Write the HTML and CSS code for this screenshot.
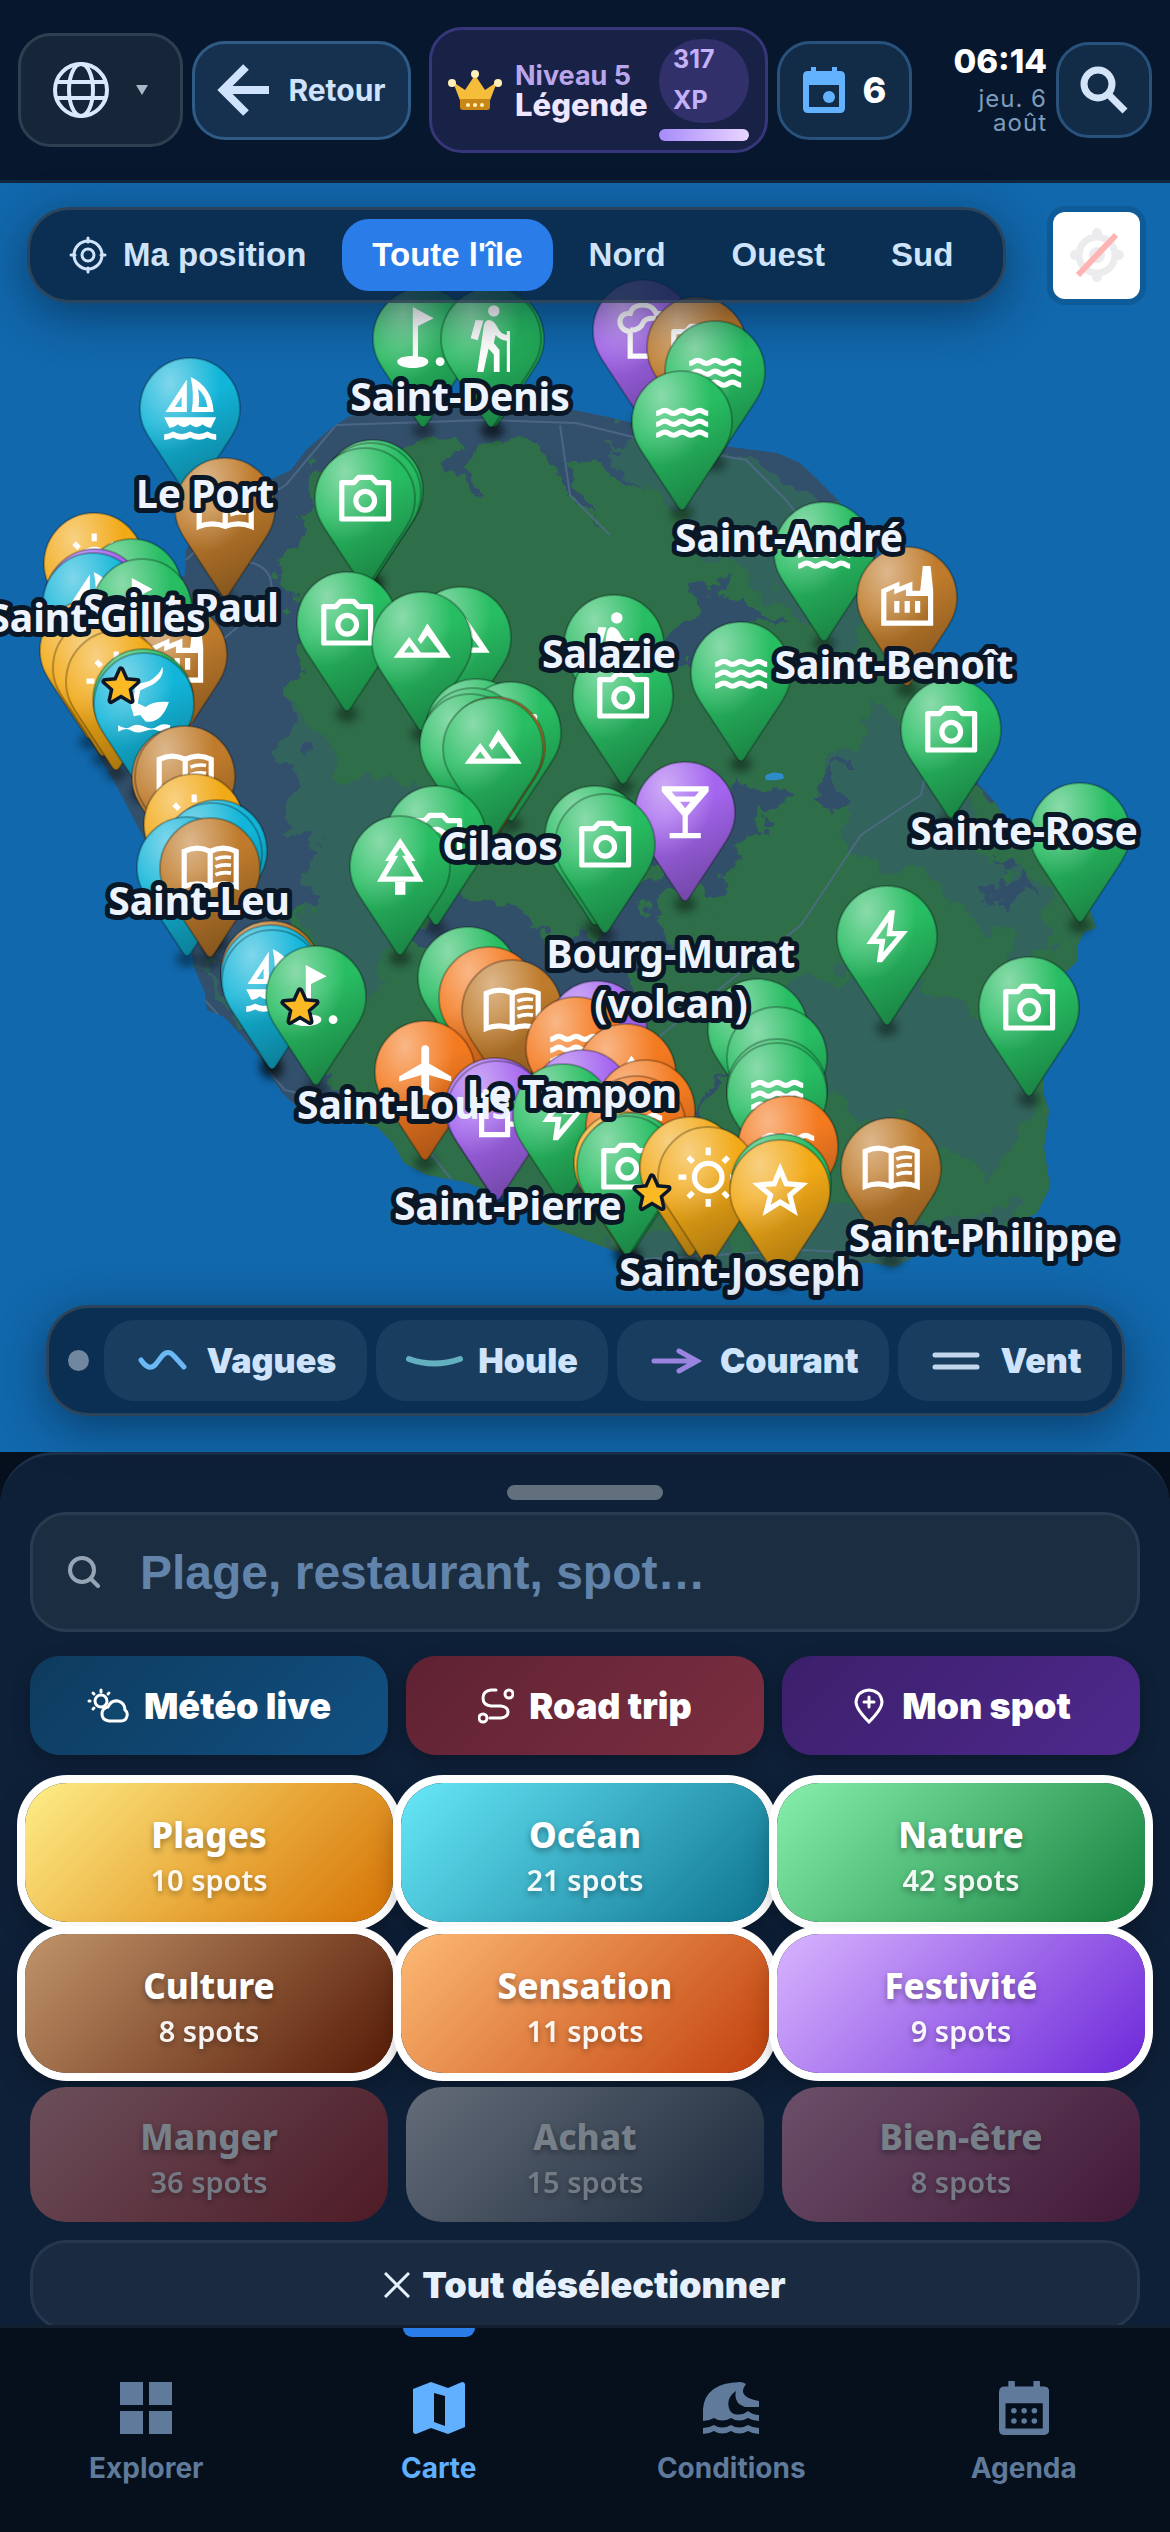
FILE: index.html
```html
<!DOCTYPE html>
<html lang="fr">
<head>
<meta charset="utf-8">
<meta name="viewport" content="width=device-width, initial-scale=1">
<title>Carte</title>
<link rel="stylesheet" href="styles.css">
</head>
<body>
<header class="topbar">
  <button class="pill lang" aria-label="Langue">
    <svg class="globe" viewBox="0 0 56 56" fill="none" stroke="currentColor" stroke-width="4"><circle cx="28" cy="28" r="26"/><ellipse cx="28" cy="28" rx="12" ry="26"/><path d="M4 20h48M4 36h48"/></svg>
    <svg class="caret" viewBox="0 0 12 10"><path d="M0 0h12L6 10z" fill="currentColor"/></svg>
  </button>
  <button class="pill back">
    <svg viewBox="0 0 52 52" fill="none" stroke="currentColor" stroke-width="8"><path d="M29 3 6 26l23 23M6 26h46"/></svg>
    Retour
  </button>
  <section class="pill level">
    <svg class="crown" viewBox="0 0 54 40"><path d="M5 12 17 20 27 5l10 15 12-8-8 21H13z" fill="#f5bd3a"/><path d="M12 29h30v8q0 3-3 3H15q-3 0-3-3z" fill="#c98718"/><g fill="#fff0b8"><circle cx="4" cy="13" r="4"/><circle cx="50" cy="13" r="4"/><circle cx="27" cy="4" r="4"/><circle cx="20" cy="35" r="2"/><circle cx="27" cy="35" r="2"/><circle cx="34" cy="35" r="2"/></g></svg>
    <div class="rank"><span>Niveau 5</span><strong>Légende</strong></div>
    <div class="xp"><span class="xp-badge">317 XP</span><span class="xp-bar"></span></div>
  </section>
  <button class="pill day">
    <svg viewBox="0 0 42 46"><path fill="currentColor" fill-rule="evenodd" d="M8 0h5v4h16V0h5v4h3q5 0 5 5v32q0 5-5 5H5q-5 0-5-5V9q0-5 5-5h3zM6 18v22h30V18z"/><circle cx="26" cy="30" r="6" fill="currentColor"/></svg>
    6
  </button>
  <div class="clock"><strong>06:14</strong><span>jeu. 6 août</span></div>
  <button class="pill find" aria-label="Rechercher">
    <svg viewBox="0 0 48 48" fill="none" stroke="currentColor" stroke-width="7"><circle cx="18" cy="18" r="14"/><path d="m28 28 17 17"/></svg>
  </button>
</header>

<main>
<section class="map" aria-label="Carte">
  <svg class="island" viewBox="0 183 1170 1269">
    <defs>
      <filter id="rough" x="-10%" y="-10%" width="120%" height="120%"><feTurbulence type="fractalNoise" baseFrequency="0.022" numOctaves="5" seed="8"/><feDisplacementMap in="SourceGraphic" scale="80" xChannelSelector="R" yChannelSelector="G"/></filter>
      <filter id="soft" x="-50%" y="-50%" width="200%" height="200%"><feGaussianBlur stdDeviation="4"/></filter>
      <radialGradient id="shine" cx=".3" cy=".18" r=".5"><stop offset="0" stop-color="#fff" stop-opacity=".46"/><stop offset="1" stop-color="#fff" stop-opacity="0"/></radialGradient>
      <linearGradient id="shade" x1=".3" y1="0" x2=".65" y2="1"><stop offset=".35" stop-opacity="0"/><stop offset="1" stop-opacity=".32"/></linearGradient>
      <clipPath id="land"><path d="M186 550 190 543 230 500 276 477 291 470 306 450 329 430 348 417 400 402 500 396 574 410 608 417 670 432 731 447 777 453 800 463 815 477 838 500 862 535 885 575 910 620 935 680 960 740 979 785 995 802 1006 820 1040 845 1065 880 1090 910 1096 928 1084 932 1078 945 1078 960 1063 975 1050 1010 1043 1080 1043 1093 1049 1110 1044 1147 1050 1187 1037 1213 980 1240 914 1257 895 1267 872 1263 800 1262 720 1270 660 1264 619 1253 580 1238 546 1225 510 1200 465 1182 427 1175 404 1163 393 1143 377 1127 330 1115 293 1103 282 1093 259 1057 243 1037 224 1017 207 1010 205 993 194 967 191 948 165 900 150 850 115 783 92 745 72 690 90 640 150 600 185 575z"/></clipPath>
      <path id="drop" d="M50 0C22 0 0 23 0 51c0 14 6 24 12 33l34 52q4 6 8 0l34-52c6-9 12-19 12-33C100 23 78 0 50 0z"/>
      <g id="camera" class="line"><path d="M3 20V6h4.600l1.900-2h5l1.900 2H21v14z" stroke-linejoin="round"/><circle cx="12" cy="13" r="3.600"/></g>
      <g id="waves" class="line"><path d="M2 9c1.670 0 1.670-1.200 3.330-1.200s1.670 1.200 3.330 1.200 1.670-1.200 3.330-1.200 1.670 1.200 3.330 1.200 1.670-1.200 3.330-1.200S20.300 9 22 9M2 13.200c1.670 0 1.670-1.200 3.330-1.200s1.670 1.200 3.330 1.200S10.300 12 12 12s1.670 1.200 3.330 1.200 1.670-1.200 3.330-1.200 1.670 1.200 3.330 1.200M2 17.400c1.670 0 1.670-1.200 3.330-1.200s1.670 1.200 3.330 1.200 1.670-1.200 3.330-1.200 1.670 1.200 3.330 1.200 1.670-1.200 3.330-1.200 1.670 1.200 3.330 1.200"/></g>
      <g id="mountain" class="solid"><path fill-rule="evenodd" d="m1 18 6-8 4.500 6H19l-5-6.650-2.500 3.320L10.250 11 14 4.800 23 18zm4-2h4l-2-2.700z"/></g>
      <g id="bolt" class="solid"><path fill-rule="evenodd" d="m10.550 18.200 5.170-6.200h-4l.730-5.680L7.820 13h3.480zM8 22l1-7H4l9-13h2l-1 8h6L10 22z"/></g>
      <g id="sun" class="line"><circle cx="12" cy="12" r="5.300"/><path d="M12 .6v3M12 20.400v3M.6 12h3M20.400 12h3M4.300 4.300l1.900 1.900M17.800 17.800l1.900 1.900M4.300 19.700l1.900-1.900M17.800 6.200l1.900-1.900"/></g>
      <g id="star" class="line"><path d="m12 4 2.300 5.500 6 .5-4.600 3.900 1.500 5.900-5.200-3.200-5.200 3.200 1.500-5.900L3.700 10l6-.5z"/></g>
      <g id="book" class="line"><path d="M2 5.500Q7 3 12 5.500 17 3 22 5.500V19q-5-2-10 0-5-2-10 0zM12 5.500V19"/><path stroke-width="1.400" d="M14 8.500q3-1.200 6-.6M14 11.500q3-1.200 6-.6M14 14.500q3-1.200 6-.6"/></g>
      <g id="sail" class="solid"><path fill-rule="evenodd" d="M2.500 13.500 10.700 1v12.500zm3.600-2h2.600V7.500zM12.500 13.500Q13.700 7 12.200 0 20.500 4 21 13.500zm2.700-2h3.400Q18 7 14.900 4.500q.8 3 .3 7zM2 15.500h20l-2 4q-1.800 0-3.200-1.300-2.400 2.200-4.800 0-2.400 2.200-4.800 0Q5.800 19.500 4 19.500zM2 22q1.900 0 3.400-1 3.300 1.800 6.600 0 3.300 1.800 6.600 0Q20 22 22 22v2.200q-1.800 0-3.400-.9-3.300 1.700-6.600 0-3.300 1.700-6.600 0-1.600.9-3.400.9z"/></g>
      <g id="golf" class="solid"><path d="M8 0l8 4.300-6 3V19q4 .3 4 2c0 1.500-2.700 2.500-6 2.500S2 22.500 2 21c0-1.300 2-2.200 6-2.200z"/><circle cx="18.500" cy="21" r="1.700"/></g>
      <g id="hike" class="solid"><circle cx="13" cy="1.500" r="2.200"/><path d="m6 5-1.900 7 2.700.8L9 5.200zM9 25l2-9 2 2.300V25h2.200v-8.500L13 13.800l.7-3q1.600 2 4.300 2.200V25h1.200V9.200H18v1.600q-2.100-.3-3.200-2.200-1.500-3.500-3.600-3.600Q9.700 5 9.200 7L6.600 25z"/></g>
      <g id="bar" class="solid"><path fill-rule="evenodd" d="M6 22v-2h5v-6.600L3 4V2h18v2l-8 9.400V20h5v2zM8.300 6h7.400l1.600-2H6.700zM12 10.500 14 8h-4z"/></g>
      <g id="tree" class="line"><path d="m12 3-4 6h1.500L4.800 17h14.400L14.500 9H16z"/><path stroke-width="4" d="M12 18v5"/></g>
      <g id="plane" class="solid"><path d="M22 16v-2l-8.500-5V3.500a1.500 1.500 0 0 0-3 0V9L2 14v2l8.500-2.500V19L8 20.500V22l4-1 4 1v-1.500L13.500 19v-5.500z"/></g>
      <g id="factory" class="solid"><path fill-rule="evenodd" d="M2 23V9l7-3v2l5-2v3.500h3l1-9.500h3l1 9.500V23zm2-2h16v-9.500H11.500V9L7 10.900V8.700L4 10.200zm3-7.500h2V18H7zm4 0h2V18h-2zm4 0h2V18h-2z"/></g>
      <g id="chef" class="line"><path d="M7 22v-9.500C1.500 12 2 5 7 5.500 8 1.500 15 1 17 5.500c5-.5 5.500 7 0 7V22zM7 12q4 0 5-3 1-2 5-1.500"/></g>
      <g id="beer" class="line"><path d="M6 21V6h10v15zM16 9h4v8h-4"/></g>
      <g id="kite" class="solid"><path d="M19-2q-1 3-5 5.500L8.500 5 8 10q-2 2.500-.5 5L8 17l2.500-.5 2 2.500q6 1 9-7.500-6-.5-9 2L9.500 12l1-5L15 5q5-3 4-7zM2 20.500q3 2 5 .5t5 0 5 0 5-.5v2q-3 .8-5 0t-5 .3-5-.3-5 .5z"/></g>
      <path id="fav" d="m0-16 4.700 10.500L16-4.500 7.500 3 10 14.500 0 8.500-10 14.500-7.500 3-16-4.500l11.300-1z"/>
    </defs>
    <rect y="183" width="1170" height="1269" fill="#1168ac"/>
    <g clip-path="url(#land)">
      <rect y="380" width="1170" height="900" fill="#32506b"/>
      <g filter="url(#rough)">
        <path fill="#2d6e49" d="M310 470q110-50 220-20 90 30 170 50 110 20 180 110 80 100 120 200 100 60 120 140 0 160-20 290-150 80-350 70-180 0-280-90-120-50-140-160-30-120-10-250-60-140-10-340z"/>
        <path fill="#33635c" d="M290 700q60 100 120 80 20 130-60 240-60-160-60-320zM600 430q150 0 260 110 40 80-30 100-70-60-150-110zM900 700q60 90 90 150l60 70-20 60q-90-120-180-130-50-80 50-150zM720 1010q140-80 260 0 60 60 40 160-200-50-300-160zM600 1240q150-10 420-40l-40 60-360 30zM200 950l50 90-30-10z"/>
        <path fill="#32506b" d="M560 440l30 90-30-40-20-50zM720 590l60 20-80 50-100 0-20-30 70 0zM640 870l100-90 40 20-50 70-70 100-60 80-80-20 60-90zM440 870l90 50 40 60-60 40-90-90zM360 520l20 70-20-50zM790 800l60-30-10 40zM470 430l0 60-20-40zM750 1010l-60 130 20-20zM1000 860l20 60-40-40z"/>
        <path fill="#2d6e49" d="M640 900l60-20 20 30-70 40z"/>
      </g>
      <g class="roads"><path d="M186 560q40-40 100-75l50-60 150-5 90 3 110 27 60 10 40 40 40 50 90 110 25 45-20 90-60 40-60 90-140 110-10 50M205 1000l80 90 120 30 70 90 150 50 180-10 180 10 110-60 2-120-10-100 20-60M230 560q50 0 40 40l-60 50-20 80M560 425l10 70 40 40"/></g>
      <path fill="#2e8cc8" d="M765 776q8-6 18-2l1 4q-4 3-18 2z"/>
    </g>
    <g id="pins"></g>
    <g class="places">
      <text x="205" y="508">Le Port</text><text x="460" y="411">Saint-Denis</text>
      <text x="181" y="622">Saint-Paul</text><text x="97" y="632">Saint-Gilles</text>
      <text x="789" y="552">Saint-André</text><text x="609" y="668">Salazie</text>
      <text x="894" y="679">Saint-Benoît</text><text x="1024" y="845">Sainte-Rose</text>
      <text x="500" y="860">Cilaos</text><text x="199" y="915">Saint-Leu</text>
      <text x="671" y="968">Bourg-Murat</text><text x="671" y="1018">(volcan)</text>
      <text x="572" y="1108">Le Tampon</text><text x="404" y="1119">Saint-Lo<tspan class="bare">uis</tspan></text>
      <text x="508" y="1220">Saint-Pierre</text><text x="740" y="1286">Saint-Joseph</text>
      <text x="983" y="1252">Saint-Philippe</text>
    </g>
    <g class="favs"><use href="#fav" x="121" y="686"/><use href="#fav" x="300" y="1007"/><use href="#fav" x="652" y="1193"/></g>
  </svg>

  <div class="map-top">
    <nav class="zones" aria-label="Zones">
      <button><svg viewBox="0 0 38 38" fill="none" stroke="currentColor" stroke-width="3" stroke-linecap="round"><circle cx="19" cy="19" r="14"/><circle cx="19" cy="19" r="6"/><path d="M19 2v4M19 32v4M2 19h4M32 19h4"/></svg>Ma position</button>
      <button class="on">Toute l'île</button><button>Nord</button><button>Ouest</button><button>Sud</button>
    </nav>
    <button class="locate" aria-label="Localisation désactivée"><svg viewBox="0 0 54 54" fill="none"><circle cx="27" cy="27" r="18" stroke="#ececee" stroke-width="7"/><circle cx="27" cy="27" r="8" fill="#ececee"/><g fill="#ececee"><circle cx="27" cy="5" r="5"/><circle cx="27" cy="49" r="5"/><circle cx="5" cy="27" r="5"/><circle cx="49" cy="27" r="5"/></g><path d="M8 47 46 7" stroke="#ffb4b4" stroke-width="6"/></svg></button>
  </div>

  <div class="layers">
    <span class="dot"></span>
    <button><svg viewBox="0 0 57 30" fill="none" stroke="#6cb8f5" stroke-width="5" stroke-linecap="round"><path d="M6 14q8 12 15 4l6-8q6-7 12 0l10 11"/></svg>Vagues</button>
    <button><svg viewBox="0 0 57 30" fill="none" stroke="#62b0c0" stroke-width="6" stroke-linecap="round"><path d="M3 13q25 9 51 0"/></svg>Houle</button>
    <button><svg viewBox="0 0 57 30" fill="none" stroke="#9a84e0" stroke-width="5" stroke-linecap="round"><path d="M6 15h43M31 5l18 10-18 10"/></svg>Courant</button>
    <button><svg viewBox="0 0 57 30" fill="none" stroke="#c4d6ec" stroke-width="5" stroke-linecap="round"><path d="M6 9h42M6 21h42"/></svg>Vent</button>
  </div>
</section>

<section class="sheet">
  <span class="handle"></span>
  <label class="search">
    <svg viewBox="0 0 32 32" fill="none" stroke="currentColor" stroke-width="4" stroke-linecap="round"><circle cx="14" cy="14" r="12"/><path d="m23 23 7 7"/></svg>
    <input type="text" placeholder="Plage, restaurant, spot…" aria-label="Rechercher un lieu">
  </label>
  <div class="grid actions">
    <button class="meteo"><svg viewBox="0 0 42 36"><g fill="none" stroke="currentColor" stroke-width="3" stroke-linecap="round"><circle cx="14" cy="13" r="6"/><path d="M14 2v2M3 13h-1M6 5l1 1M22 5l-1 1M6 21l1-1"/><path d="M22 33q-7-1-7-7 0-6 6-7 3-7 10-6 7 2 7 9 3 2 2 6-1 5-6 5z" fill="#10476f"/></g></svg>Météo live</button>
    <button class="road"><svg viewBox="0 0 36 36" fill="none" stroke="currentColor" stroke-width="3" stroke-linecap="round"><circle cx="5" cy="30" r="4"/><circle cx="31" cy="6" r="4"/><path d="M18 2h-5q-8 1-8 8t8 8h10q7 1 7 6t-7 6H12"/></svg>Road trip</button>
    <button class="mine"><svg viewBox="0 0 36 36" fill="none" stroke="currentColor" stroke-width="3" stroke-linecap="round"><path d="M18 34Q5 21 5 14 6 3 18 2q12 1 13 12 0 7-13 20zM18 9v10M13 14h10"/></svg>Mon spot</button>
  </div>
  <div class="grid cats">
    <button class="cat plages"><b>Plages</b><span>10 spots</span></button>
    <button class="cat ocean"><b>Océan</b><span>21 spots</span></button>
    <button class="cat nature"><b>Nature</b><span>42 spots</span></button>
    <button class="cat culture"><b>Culture</b><span>8 spots</span></button>
    <button class="cat sensation"><b>Sensation</b><span>11 spots</span></button>
    <button class="cat festivite"><b>Festivité</b><span>9 spots</span></button>
    <button class="cat off manger"><b>Manger</b><span>36 spots</span></button>
    <button class="cat off achat"><b>Achat</b><span>15 spots</span></button>
    <button class="cat off bien"><b>Bien-être</b><span>8 spots</span></button>
  </div>
  <button class="clear"><svg viewBox="0 0 26 26" fill="none" stroke="currentColor" stroke-width="3"><path d="m1 1 24 24M25 1 1 25"/></svg>Tout désélectionner</button>
</section>
</main>

<nav class="tabs">
  <a href="#explorer"><svg viewBox="0 0 54 54" fill="currentColor"><path d="M1 1h23v23H1zM30 1h23v23H30zM1 30h23v23H1zM30 30h23v23H30z"/></svg>Explorer</a>
  <a href="#carte" class="active"><svg viewBox="0 0 54 54" fill="currentColor"><path fill-rule="evenodd" d="M1 8 19 1l17 6 14-6q3 0 3 3v42l-17 7-17-6-15 6q-3 0-3-3zm21 4v29l11 4V15z"/></svg>Carte</a>
  <a href="#conditions"><svg viewBox="0 0 58 54" fill="currentColor"><path d="M1 40V28Q3 2 38 1q3 0 6 2-10 13 13 17v6H43Q31 22 34 10q-10 7-7 17 1 4 5 6 8 2 14-3 5 4 11 4v6q-6 0-11-3-9 5-17 0-9 5-17 0-5 3-11 3zM1 47q6 0 11-3 8 5 17 0 8 5 17 0 5 3 11 3v6q-6 0-11-3-9 5-17 0-9 5-17 0-5 3-11 3z"/></svg>Conditions</a>
  <a href="#agenda"><svg viewBox="0 0 54 58" fill="currentColor"><path fill-rule="evenodd" d="M10 0h7v6h20V0h7v6h4q6 0 6 6v40q0 6-6 6H6q-6 0-6-6V12q0-6 6-6h4zM7 24v27h40V24z"/><g><circle cx="16" cy="32" r="3"/><circle cx="27" cy="32" r="3"/><circle cx="38" cy="32" r="3"/><circle cx="16" cy="43" r="3"/><circle cx="27" cy="43" r="3"/><circle cx="38" cy="43" r="3"/></g></svg>Agenda</a>
</nav>
<script src="pins.js"></script>
</body>
</html>
```
FILE: styles.css
```css
* { box-sizing: border-box; }
body { margin: 0; background: #06101d; color: #fff; font-family: Inter, sans-serif; overflow-x: hidden; }
button { font: inherit; color: inherit; border: 0; background: none; padding: 0; margin: 0; cursor: pointer; white-space: nowrap; }
svg { display: block; flex: none; }

.topbar { display: flex; align-items: center; gap: 9px; padding: 27px 18px; background: #07182e; border-bottom: 3px solid #12273d; }
.pill { display: flex; align-items: center; justify-content: center; height: 99px; border: 3px solid #28527b; border-radius: 33px; background: #122c48; flex: none; }
.lang { width: 165px; height: 114px; gap: 27px; background: #172538; border-color: #2e3f52; color: #d9e8fa; }
.globe { width: 56px; }
.caret { width: 12px; color: #a9b7c8; }
.back { width: 219px; gap: 19px; background: #15314f; border-color: #2f5b87; color: #cfe3fc; font-size: 30px; font-weight: 700; }
.back svg { width: 52px; }
.level { width: 339px; height: 126px; margin-left: 9px; gap: 13px; background: #182246; border-color: #38367a; }
.crown { width: 54px; }
.rank { display: flex; flex-direction: column; width: 131px; line-height: 29px; font-size: 27px; font-weight: 700; color: #bba6ec; }
.rank strong { font-size: 31px; font-weight: 800; color: #efe6ff; }
.xp { display: flex; flex-direction: column; gap: 6px; width: 90px; }
.xp-badge { height: 84px; padding: 0 14px; border-radius: 42px; background: #31306b; color: #c4b1f8; font-size: 25px; font-weight: 700; line-height: 41px; }
.xp-bar { height: 12px; border-radius: 6px; background: linear-gradient(90deg, #a78bfa, #e9d5ff); }
.day { width: 135px; gap: 18px; color: #fff; font-size: 36px; font-weight: 800; }
.day svg { width: 42px; color: #62b2ff; }
.clock { flex: 1; display: flex; flex-direction: column; align-items: flex-end; text-align: right; font-size: 24px; line-height: 24px; color: #7f9cbc; }
.clock strong { font-size: 33px; line-height: 33px; font-weight: 800; color: #fff; margin-bottom: 9px; }
.clock span { width: 78px; letter-spacing: 1px; }
.find { width: 96px; height: 96px; color: #d3e4f8; }
.find svg { width: 48px; }

.map { position: relative; }
.island { width: 100%; height: auto; }
.roads { fill: none; stroke: #516c8c; stroke-width: 2; opacity: .8; }
.line { fill: none; stroke: #fff; stroke-width: 2; }
.solid { fill: #fff; }
.rim { fill: none; stroke: #000; stroke-opacity: .25; stroke-width: 2; }
.green { fill: #27bd62; }
.cyan { fill: #12b5d9; }
.brown { fill: #bf7b2b; }
.orange { fill: #f47a20; }
.yellow { fill: #f2a916; }
.purple { fill: #a465ef; }
.places { font: 700 39px "Noto Sans", sans-serif; text-anchor: middle; fill: #eef4ff; stroke: #0a1726; stroke-width: 10px; stroke-linejoin: round; paint-order: stroke; }
.bare { stroke: none; }
.favs { fill: #fbb924; stroke: #0a1726; stroke-width: 7px; stroke-linejoin: round; paint-order: stroke; }

.map-top { position: absolute; top: 24px; left: 27px; right: 30px; display: flex; align-items: center; gap: 47px; }
.zones { flex: 1; display: flex; gap: 6px; padding: 9px; border: 3px solid rgba(80, 90, 100, .5); border-radius: 42px; background: rgba(9, 34, 62, .82); box-shadow: 0 12px 48px rgba(0, 10, 30, .45); color: #cfe3fa; font: 700 33px "Liberation Sans", Arial, sans-serif; }
.zones button { display: flex; align-items: center; gap: 16px; height: 72px; padding: 0 30px; border-radius: 27px; }
.zones svg { width: 38px; }
.zones .on { background: #2a7de8; color: #fff; }
.locate { display: flex; align-items: center; justify-content: center; width: 87px; height: 87px; border-radius: 12px; background: #fff; box-shadow: 0 0 0 6px rgba(0, 20, 50, .15); }
.locate svg { width: 54px; }

.layers { position: absolute; bottom: 36px; left: 46px; right: 45px; display: flex; align-items: center; gap: 9px; padding: 12px 10px 12px 19px; border: 3px solid rgba(80, 90, 100, .5); border-radius: 42px; background: rgba(9, 34, 62, .82); box-shadow: 0 12px 48px rgba(0, 10, 30, .45); color: #cfe3fa; font-size: 34px; font-weight: 900; }
.dot { width: 21px; height: 21px; margin-right: 6px; border-radius: 50%; background: #71869f; flex: none; }
.layers button { display: flex; flex: 1 1 auto; align-items: center; justify-content: center; gap: 15px; height: 81px; border-radius: 30px; background: #183d5f; }
.layers svg { width: 57px; }

.sheet { display: flex; flex-direction: column; padding: 30px 30px 0; border-top: 3px solid #1c3049; border-radius: 54px 54px 0 0; background: #0e2038; }
.handle { width: 156px; height: 15px; margin: 0 auto 12px; border-radius: 8px; background: #62707e; }
.search { display: flex; align-items: center; gap: 40px; height: 120px; padding: 0 35px; border: 3px solid #293b51; border-radius: 36px; background: #1b2d41; color: #96a5b5; }
.search svg { width: 32px; }
.search input { flex: 1; min-width: 0; padding: 0; border: 0; outline: 0; background: none; color: #fff; font: 700 48px "Liberation Sans", Arial, sans-serif; }
.search input::placeholder { color: #6284ab; opacity: 1; }
.grid { display: grid; grid-template-columns: repeat(3, 1fr); column-gap: 18px; }
.actions { margin-top: 24px; font-size: 36px; font-weight: 900; }
.actions button { display: flex; align-items: center; justify-content: center; gap: 15px; height: 99px; border-radius: 30px; box-shadow: 0 6px 18px rgba(0, 0, 0, .25); }
.actions svg { height: 36px; }
.meteo { background: linear-gradient(135deg, #0e3b5e, #115082); }
.road { background: linear-gradient(135deg, #5f2232, #7b2f41); }
.mine { background: linear-gradient(135deg, #3c1f6b, #4e298d); }
.cats { row-gap: 16px; margin-top: 30px; font-family: "Noto Sans", sans-serif; }
.cat { display: flex; flex-direction: column; align-items: center; justify-content: center; margin: -2px -5px; height: 139px; padding-top: 8px; border-radius: 42px; box-shadow: 0 0 0 8px #fff, 0 12px 30px rgba(0, 0, 0, .4); text-shadow: 0 3px 6px rgba(0, 0, 0, .35); }
.cat b { font-size: 35px; line-height: 46px; font-weight: 800; }
.cat span { font-size: 29px; line-height: 44px; font-weight: 600; opacity: .93; }
.off { margin: 0; height: 135px; border-radius: 36px; box-shadow: none; color: #777f89; }
.plages { background: linear-gradient(135deg, #feee88, #e9a93a 55%, #d57205); }
.ocean { background: linear-gradient(135deg, #67e8f9, #0e7490); }
.nature { background: linear-gradient(135deg, #86efac, #15803d); }
.culture { background: linear-gradient(135deg, #c0946a, #581b06); }
.sensation { background: linear-gradient(135deg, #fdba74, #c2410c); }
.festivite { background: linear-gradient(135deg, #d8b4fe, #6d28d9); }
.manger { background: linear-gradient(135deg, #6b4f5b, #4e1b26); }
.achat { background: linear-gradient(135deg, #646c78, #1b2a3c); }
.bien { background: linear-gradient(135deg, #6b4f69, #421938); }
.clear { display: flex; align-items: center; justify-content: center; gap: 12px; height: 90px; margin-top: 18px; border: 3px solid #25374d; border-radius: 36px; background: #1a2a40; color: #e6f1fd; font-size: 36px; font-weight: 900; }
.clear svg { width: 26px; }

.tabs { position: relative; display: grid; grid-template-columns: repeat(4, 1fr); margin-top: -5px; height: 207px; border-top: 3px solid #111f2f; background: #05101c; }
.tabs a { position: relative; display: flex; flex-direction: column; align-items: center; gap: 16px; padding-top: 53px; color: #5f7a9a; font-size: 28px; line-height: 34px; font-weight: 700; text-decoration: none; }
.tabs svg { height: 54px; }
.tabs .active { color: #60b0ff; }
.tabs .active::before { content: ""; position: absolute; top: 0; width: 72px; height: 9px; border-radius: 0 0 9px 9px; background: #2a7de8; }
```
FILE: pins.js
```js
// Each spot: centre x, top y, category colour, icon
const spots = [
  [423, 288, "green", "golf"], [494, 288, "green"], [491, 288, "green", "hike"],
  [643, 280, "purple", "chef"], [697, 297, "brown", "camera"], [715, 321, "green", "waves"], [682, 371, "green", "waves"],
  [190, 358, "cyan", "sail"], [373, 440, "green"], [371, 443, "green"], [365, 448, "green", "camera"],
  [225, 458, "brown", "book"], [824, 502, "green", "waves"], [94, 513, "yellow", "sun"], [132, 539, "green"],
  [907, 547, "brown", "factory"], [95, 549, "purple"], [93, 553, "cyan", "sail"], [142, 559, "green", "golf"],
  [347, 572, "green", "camera"], [461, 587, "green", "mountain"], [422, 592, "green", "mountain"],
  [614, 595, "green", "hike"], [90, 600, "yellow"], [177, 604, "brown", "factory"], [103, 617, "yellow"],
  [741, 622, "green", "waves"], [116, 631, "yellow", "sun"], [623, 645, "green", "camera"],
  [143, 649, "green"], [144, 653, "cyan", "kite"], [951, 679, "green", "camera"],
  [476, 679, "green"], [511, 682, "green", "camera"], [473, 688, "green"], [470, 694, "green"],
  [495, 697, "brown"], [493, 698, "green", "mountain"], [182, 727, "brown"], [185, 726, "brown", "book"],
  [685, 762, "purple", "bar"], [194, 774, "yellow", "sun"], [1080, 783, "green"],
  [436, 786, "green", "camera"], [595, 786, "green"], [605, 794, "green", "camera"],
  [217, 800, "cyan"], [212, 803, "cyan"], [400, 816, "green", "tree"], [187, 817, "cyan"], [210, 818, "brown", "book"],
  [887, 886, "green", "bolt"], [271, 921, "brown"], [271, 925, "cyan"], [272, 930, "cyan", "sail"],
  [468, 927, "green"], [316, 946, "green", "golf"], [489, 947, "orange"], [1029, 957, "green", "camera"],
  [512, 960, "brown", "book"], [758, 979, "green", "mountain"], [597, 981, "purple"], [576, 997, "orange", "waves"],
  [777, 1007, "green"], [425, 1021, "orange", "plane"], [626, 1024, "orange", "mountain"], [777, 1039, "green"],
  [777, 1043, "green", "waves"], [582, 1050, "purple", "camera"], [495, 1058, "purple"], [497, 1061, "purple", "beer"],
  [645, 1060, "orange"], [563, 1064, "green", "bolt"], [636, 1076, "orange", "waves"], [788, 1096, "orange", "waves"],
  [624, 1112, "yellow"], [631, 1113, "green"], [627, 1116, "green", "camera"], [690, 1117, "yellow"],
  [891, 1118, "brown", "book"], [708, 1127, "yellow", "sun"], [781, 1134, "green"], [780, 1140, "yellow", "star"]
];

document.getElementById("pins").innerHTML = spots.map(([x, y, colour, icon]) => `
  <g transform="translate(${x - 50} ${y})">
    <ellipse cx="50" cy="142" rx="11" ry="8" opacity=".4" filter="url(#soft)"/>
    <use href="#drop" class="${colour}"/>
    <use href="#drop" fill="url(#shade)"/>
    <use href="#drop" fill="url(#shine)"/>
    <use href="#drop" class="rim"/>
    ${icon ? `<g transform="translate(19 19) scale(2.6)"><use href="#${icon}"/></g>` : ""}
  </g>`).join("");
```
